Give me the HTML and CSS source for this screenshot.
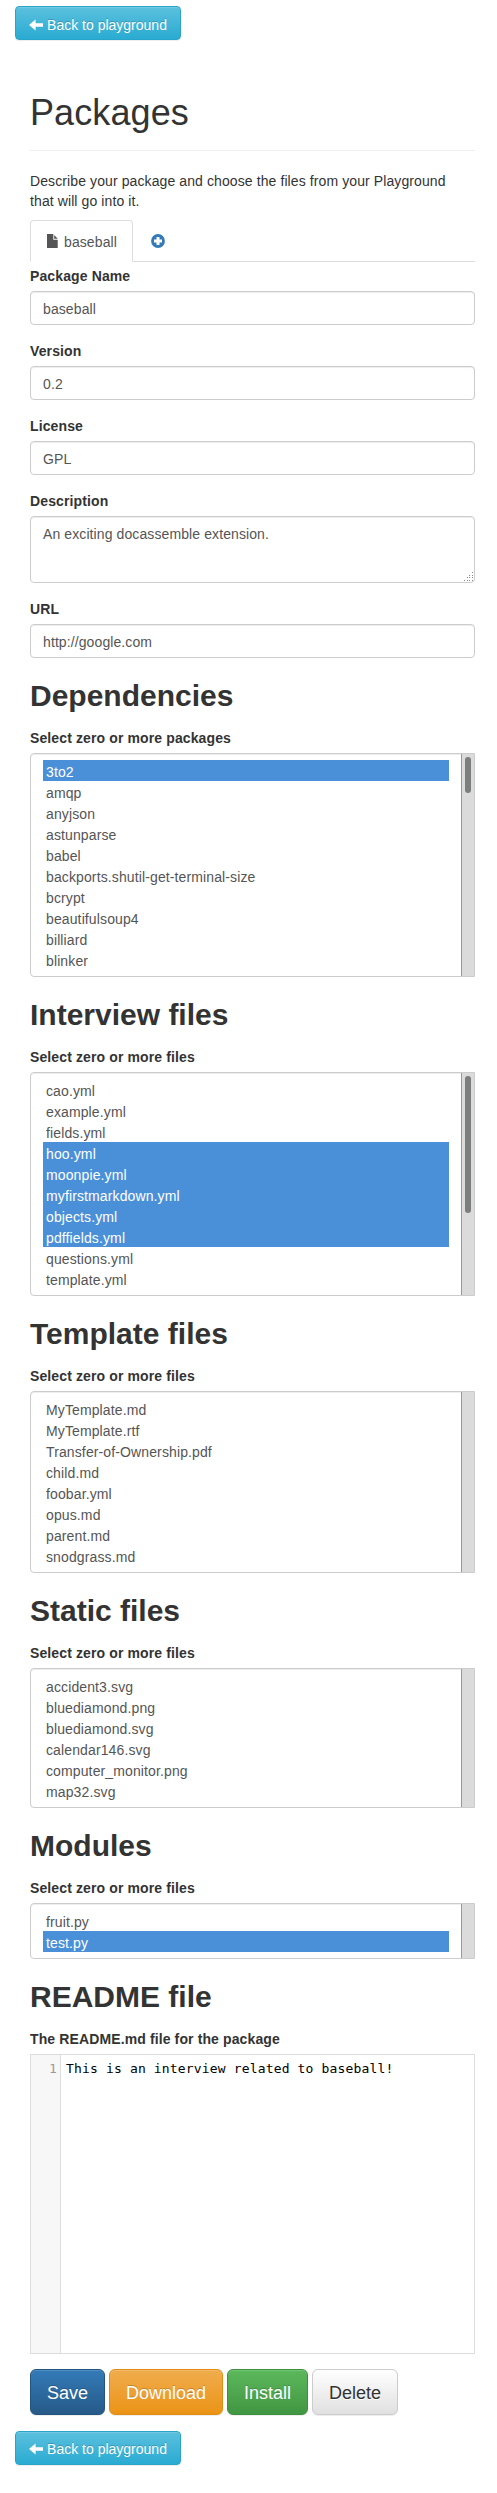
FILE: index.html
```html
<!DOCTYPE html>
<html lang="en">
<head>
<meta charset="utf-8">
<title>Packages</title>
<link rel="stylesheet" href="styles.css">
</head>
<body>
<a class="btn btn-info btn-top"><svg class="icon" viewBox="0 0 14 14"><path d="M0 7 6.600 1.400V5.200H14V8.800H6.600V12.600Z" fill="currentColor"/></svg><span>Back to playground</span></a>
<main class="container">
  <h1>Packages</h1>
  <p class="intro">Describe your package and choose the files from your Playground<br>that will go into it.</p>
  <nav class="tabs">
    <a class="tab active"><svg class="icon" viewBox="0 0 14 14"><path d="M1 0H7.300V5.800H11.700V14H1ZM8.200 .9 11.700 4.800H8.200Z" fill="currentColor"/></svg><span>baseball</span></a>
    <a class="tab"><svg class="icon" viewBox="0 0 14 14"><path fill-rule="evenodd" d="M7 .1A6.900 6.900 0 1 1 7 13.900A6.900 6.900 0 0 1 7 .1ZM5.500 3V5.500H3V8.500H5.500V11H8.500V8.500H11V5.500H8.500V3Z" fill="currentColor"/></svg></a>
  </nav>
  <form>
    <div class="group"><label>Package Name</label><input class="control" type="text" value="baseball"></div>
    <div class="group"><label>Version</label><input class="control" type="text" value="0.2"></div>
    <div class="group"><label>License</label><input class="control" type="text" value="GPL"></div>
    <div class="group"><label>Description</label><div class="area"><textarea class="control">An exciting docassemble extension.</textarea><svg class="grip" viewBox="0 0 9 9"><path d="M8 0h1v1h-1zM5 3h1v1h-1zM8 3h1v1h-1zM3 5h1v1h-1zM5 5h1v1h-1zM8 5h1v1h-1zM0 8h1v1h-1zM3 8h1v1h-1zM5 8h1v1h-1zM8 8h1v1h-1z" fill="#888"/></svg></div></div>
    <div class="group"><label>URL</label><input class="control" type="text" value="http://google.com"></div>

    <h2>Dependencies</h2>
    <label>Select zero or more packages</label>
    <div class="list"><ul><li class="selected">3to2</li><li>amqp</li><li>anyjson</li><li>astunparse</li><li>babel</li><li>backports.shutil-get-terminal-size</li><li>bcrypt</li><li>beautifulsoup4</li><li>billiard</li><li>blinker</li></ul><div class="track"><div class="thumb thumb-short"></div></div></div>

    <h2>Interview files</h2>
    <label>Select zero or more files</label>
    <div class="list"><ul><li>cao.yml</li><li>example.yml</li><li>fields.yml</li><li class="selected">hoo.yml</li><li class="selected">moonpie.yml</li><li class="selected">myfirstmarkdown.yml</li><li class="selected">objects.yml</li><li class="selected">pdffields.yml</li><li>questions.yml</li><li>template.yml</li></ul><div class="track"><div class="thumb thumb-long"></div></div></div>

    <h2>Template files</h2>
    <label>Select zero or more files</label>
    <div class="list"><ul><li>MyTemplate.md</li><li>MyTemplate.rtf</li><li>Transfer-of-Ownership.pdf</li><li>child.md</li><li>foobar.yml</li><li>opus.md</li><li>parent.md</li><li>snodgrass.md</li></ul><div class="track"></div></div>

    <h2>Static files</h2>
    <label>Select zero or more files</label>
    <div class="list"><ul><li>accident3.svg</li><li>bluediamond.png</li><li>bluediamond.svg</li><li>calendar146.svg</li><li>computer_monitor.png</li><li>map32.svg</li></ul><div class="track"></div></div>

    <h2>Modules</h2>
    <label>Select zero or more files</label>
    <div class="list"><ul><li>fruit.py</li><li class="selected">test.py</li></ul><div class="track"></div></div>

    <h2>README file</h2>
    <label>The README.md file for the package</label>
    <div class="editor"><div class="gutter">1</div><div class="code">This is an interview related to baseball!</div></div>

    <div class="actions"><button type="button" class="btn btn-lg btn-primary">Save</button><button type="button" class="btn btn-lg btn-warning">Download</button><button type="button" class="btn btn-lg btn-success">Install</button><button type="button" class="btn btn-lg btn-default">Delete</button></div>
  </form>
</main>
<a class="btn btn-info"><svg class="icon" viewBox="0 0 14 14"><path d="M0 7 6.600 1.400V5.200H14V8.800H6.600V12.600Z" fill="currentColor"/></svg><span>Back to playground</span></a>
</body>
</html>
```
FILE: styles.css
```css
* { box-sizing: border-box; }
body {
  margin: 0;
  padding: 6px 15px 28px;
  background: #fff;
  color: #333;
  font: 14px/20px "Liberation Sans", Arial, sans-serif;
  display: flex;
  flex-direction: column;
  align-items: flex-start;
}
.container { width: 100%; padding: 0 7px 0 15px; }
h1 {
  margin: 53px 0 20px;
  padding-bottom: 17px;
  border-bottom: 1px solid #eee;
  font-size: 36px;
  line-height: 40px;
  font-weight: 400;
  letter-spacing: .1px;
}
h2 { margin: 21px 0 16px; font-size: 30px; line-height: 33px; font-weight: 700; }
.intro { margin: 0 0 9px; letter-spacing: .1px; white-space: nowrap; }
label { display: block; margin-bottom: 5px; font-weight: 700; letter-spacing: .12px; }

.btn {
  display: inline-flex;
  align-items: center;
  justify-content: center;
  gap: 4px;
  height: 34px;
  padding: 2px 12px 0;
  border: 1px solid;
  border-radius: 4px;
  font: 14px/20px "Liberation Sans", Arial, sans-serif;
  color: #fff;
  white-space: nowrap;
  text-shadow: 0 -1px 0 rgba(0, 0, 0, .2);
  box-shadow: inset 0 1px 0 rgba(255, 255, 255, .15), 0 1px 1px rgba(0, 0, 0, .075);
}
.btn-top { padding-top: 4px; }
.btn-lg { height: 46px; padding: 2px 16px 0; border-radius: 6px; font-size: 18px; line-height: 24px; }
.btn-info { width: 166px; border-color: #28a4c9; background: linear-gradient(#5bc0de, #2aabd2); }
.btn-primary { width: 75px; border-color: #245580; background: linear-gradient(#337ab7, #265a88); }
.btn-warning { width: 114px; border-color: #e38d13; background: linear-gradient(#f0ad4e, #eb9316); }
.btn-success { width: 81px; border-color: #3e8f3e; background: linear-gradient(#5cb85c, #419641); }
.btn-default { width: 86px; border-color: #ccc; background: linear-gradient(#fff, #e0e0e0); color: #333; text-shadow: 0 1px 0 #fff; }
.icon { display: block; width: 14px; height: 14px; flex: none; }

.tabs { display: flex; height: 42px; margin-bottom: 4px; border-bottom: 1px solid #ddd; }
.tab {
  display: flex;
  align-items: center;
  gap: 4px;
  height: 42px;
  margin-right: 2px;
  padding: 0 15px;
  border: 1px solid transparent;
  color: #337ab7;
}
.tab span { padding-top: 2px; letter-spacing: .1px; }
.tab.active { width: 103px; border-color: #ddd #ddd #fff; border-radius: 4px 4px 0 0; background: #fff; color: #555; }

.group { margin-bottom: 16px; }
.control {
  display: block;
  width: 100%;
  height: 34px;
  margin: 0;
  padding: 7px 12px 5px;
  border: 1px solid #ccc;
  border-radius: 4px;
  background: #fff;
  color: #555;
  font: 14px/20px "Liberation Sans", Arial, sans-serif;
  letter-spacing: .1px;
  box-shadow: inset 0 1px 1px rgba(0, 0, 0, .075);
}
textarea.control { height: 67px; resize: none; overflow: hidden; }
.area { position: relative; }
.grip { position: absolute; right: 2px; bottom: 2px; width: 9px; height: 9px; }

.list {
  display: flex;
  border: 1px solid #ccc;
  border-radius: 4px 0 0 4px;
  box-shadow: inset 0 1px 1px rgba(0, 0, 0, .075);
}
.list ul { flex: 1; margin: 0; padding: 6px 12px; list-style: none; color: #555; letter-spacing: .12px; }
.list li { height: 21px; padding: 2px 3px 0; line-height: 21px; }
.list .selected { background: #4a90d9; color: #fff; }
.track { width: 13px; padding: 3px; border-left: 1px solid #999; background: #dbdbdb; }
.thumb { width: 6px; border-radius: 3px; background: #7b7e7d; }
.thumb-short { height: 36px; }
.thumb-long { height: 137px; }

.editor { display: flex; height: 300px; border: 1px solid #ddd; font: 13px/20px "DejaVu Sans Mono", monospace; letter-spacing: .16px; }
.gutter { width: 30px; padding: 4px 3px 0 0; border-right: 1px solid #ddd; background: #f7f7f7; color: #999; text-align: right; }
.code { padding: 4px 5px; color: #000; white-space: nowrap; }
.actions { display: flex; gap: 4px; margin: 15px 0 16px; }
```
